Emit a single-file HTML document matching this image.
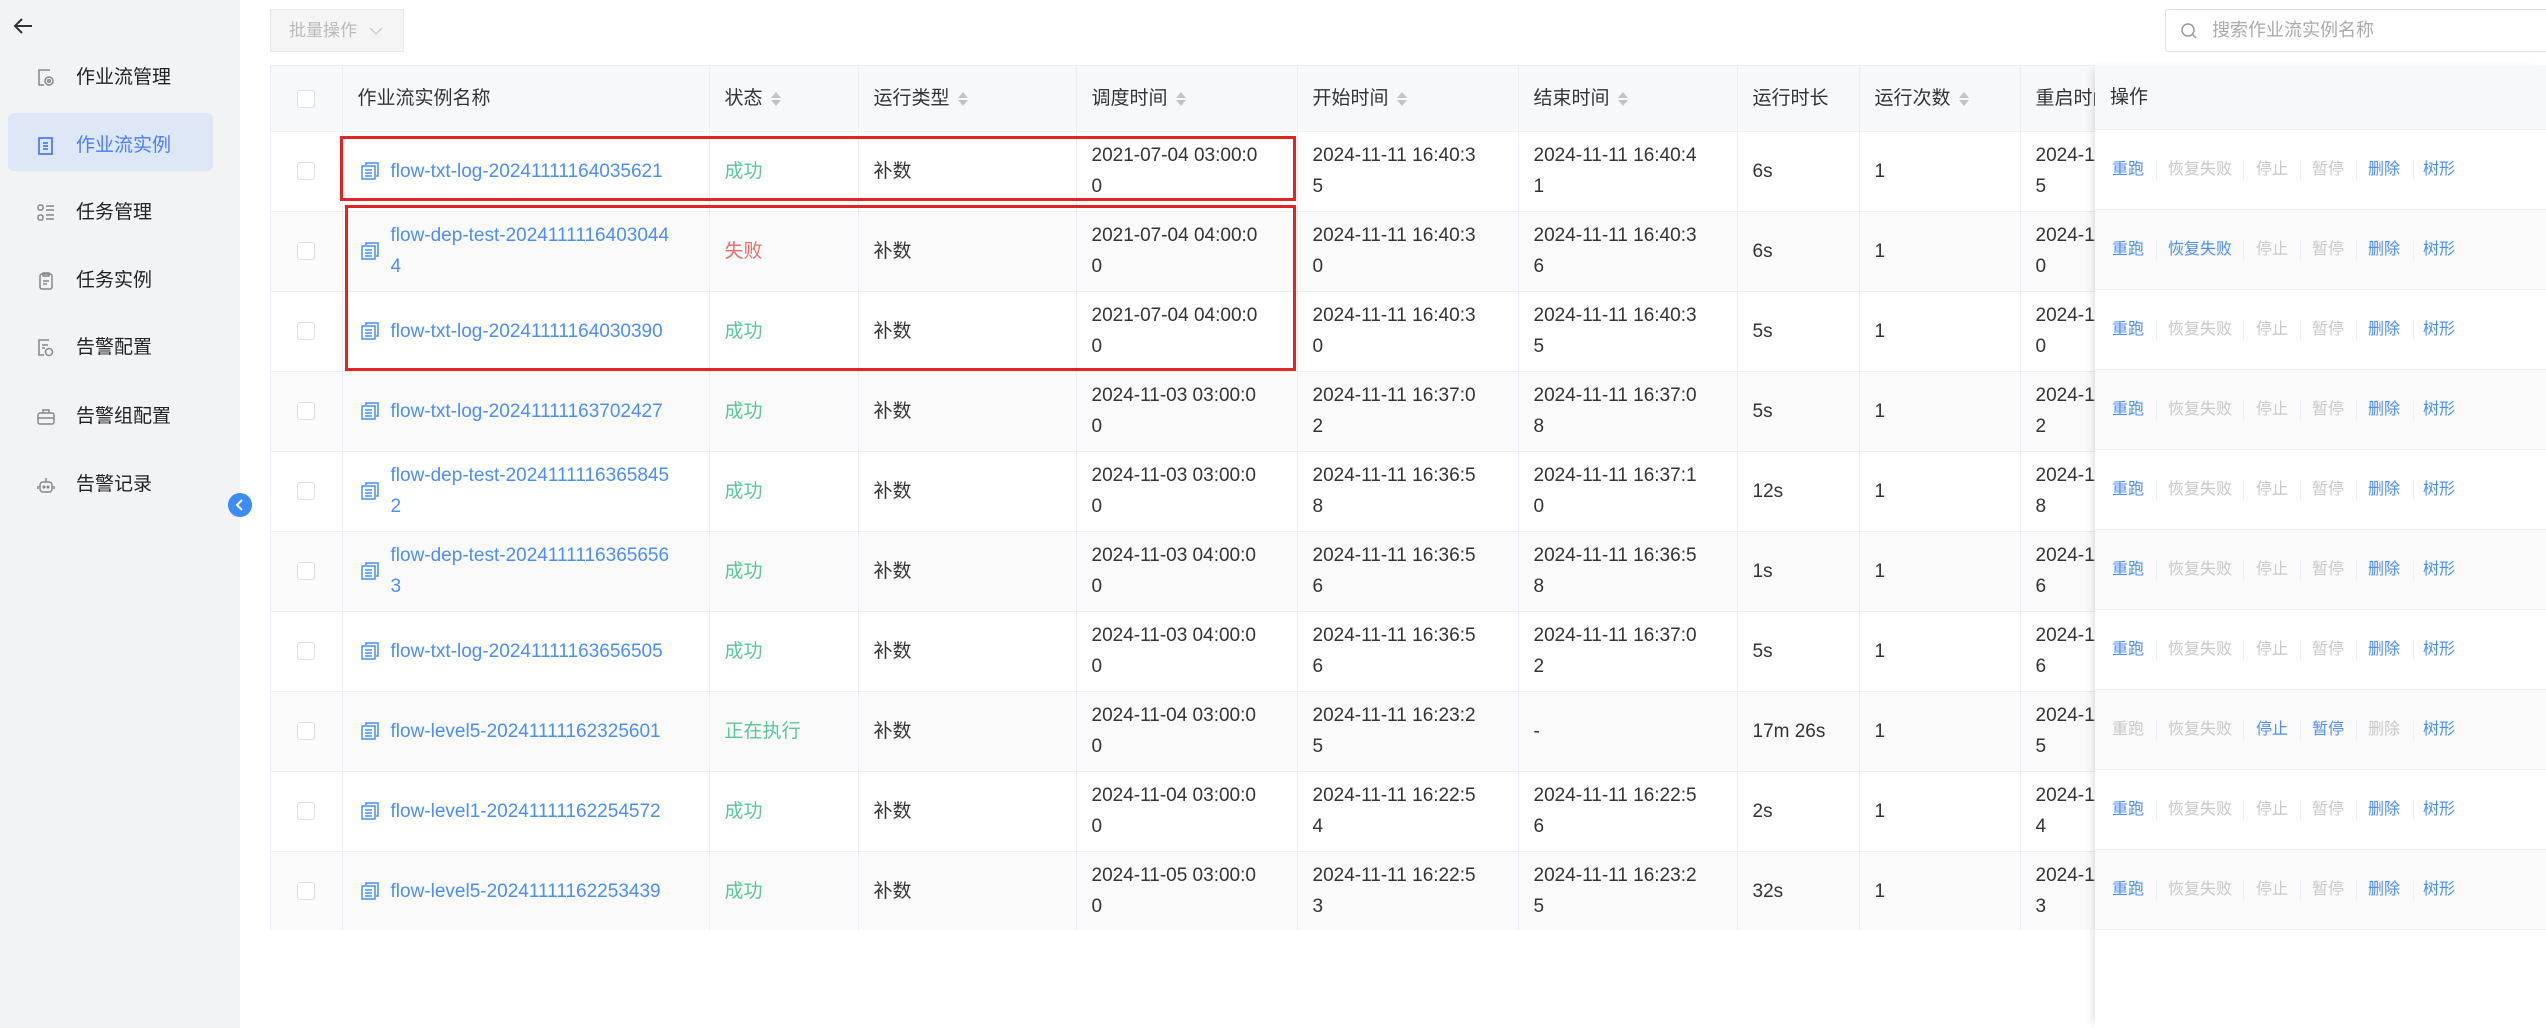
<!DOCTYPE html>
<html><head><meta charset="utf-8">
<style>
*{margin:0;padding:0;box-sizing:border-box}
body{width:2546px;height:1028px;overflow:hidden;background:#fff;font-family:"Liberation Sans","Noto Sans CJK SC",sans-serif;font-size:19px;color:#333;position:relative}
.side{position:absolute;left:0;top:0;width:240px;height:1028px;background:#f2f3f5}
.mi{position:absolute;left:0;width:240px;height:40px;line-height:40px;font-size:19px;color:#222}
.mi .t{position:absolute;left:76px}
.mi svg{position:absolute;left:36px;top:10px}
.act{position:absolute;left:8px;top:113px;width:205px;height:58px;background:#dde7f5;border-radius:6px}
.btn{position:absolute;left:270px;top:9px;width:134px;height:43px;background:#f5f5f5;border:1px solid #e8e8e8;color:#bbb;font-size:17px;line-height:41px;padding-left:18px}
.search{position:absolute;left:2165px;top:9px;width:400px;height:43px;border:1px solid #dcdfe6;border-radius:3px;color:#aaa;font-size:18px;line-height:41px;padding-left:46px}
.wrap{position:absolute;left:270px;top:65px;width:2276px;height:865px;overflow:hidden;border-left:1px solid #ebeef5;border-top:1px solid #ebeef5}
table{border-collapse:collapse;table-layout:fixed;width:2032px}
td,th{border-right:1px solid #ebeef5;border-bottom:1px solid #ebeef5;padding:0 15px;vertical-align:middle;line-height:31px;font-weight:normal;text-align:left;white-space:nowrap;overflow:hidden}
th{height:65px;background:#f7f8fa;color:#333}
td{height:80px}
tr.g td{background:#fafafa}
.cb{display:inline-block;width:18px;height:18px;border:1px solid #dcdfe6;border-radius:3px;background:#fff;vertical-align:middle}
.c0{text-align:center;padding:0}
.lk{color:#4b8ef7}
.nm{position:relative;padding-left:48px}
.nm svg{position:absolute;left:18px;top:50%;margin-top:-9px}
.ok{color:#5ac59a}.bad{color:#ef6b6b}
.s{display:inline-block;vertical-align:middle;margin-left:8px;width:10px;height:16px;position:relative}
.s:before,.s:after{content:"";position:absolute;left:0;border-left:5px solid transparent;border-right:5px solid transparent}
.s:before{top:1px;border-bottom:6px solid #c0c4cc}
.s:after{bottom:1px;border-top:6px solid #c0c4cc}
.ops{position:absolute;left:2095px;top:65px;width:451px;height:963px;background:transparent;box-shadow:-6px 0 8px -4px rgba(0,0,0,.12)}
.or{height:80px;border-bottom:1px solid #ebeef5;position:relative;font-size:16px;background:#fff}
.or.g{background:#fafafa}
.or.h{height:65px;background:#f7f8fa;font-size:19px;line-height:65px;padding-left:15px;color:#333}
.or span{position:absolute;top:29px;line-height:22px}
.or i{position:absolute;top:30px;width:1px;height:20px;background:#ebeef5}
.b{color:#4b8ef7}.d{color:#c8c8c8}
.box{position:absolute;border:3px solid #e02525}
</style></head><body>
<div class="side">
 <svg style="position:absolute;left:12px;top:16px" width="22" height="20" viewBox="0 0 22 20"><path d="M20 10H3M10 3L3 10l7 7" stroke="#333" stroke-width="2" fill="none"/></svg>
 <div class="act"></div>
 <div class="mi" style="top:58px"><svg width="20" height="20" viewBox="0 0 20 20" fill="none" stroke="#888" stroke-width="1.5"><path d="M14 2H3v15h5"/><circle cx="13" cy="13" r="4"/><circle cx="13" cy="13" r="1.3"/></svg><span class="t">作业流管理</span></div>
 <div class="mi" style="top:126px;color:#4b7ef5"><svg width="20" height="20" viewBox="0 0 20 20" fill="none" stroke="#4b7ef5" stroke-width="1.8"><rect x="3" y="2" width="13" height="16"/><path d="M7 7h5M7 10h5M7 13h5"/></svg><span class="t">作业流实例</span></div>
 <div class="mi" style="top:193px"><svg width="20" height="20" viewBox="0 0 20 20" fill="none" stroke="#888" stroke-width="1.5"><rect x="2" y="2" width="5" height="5" rx="2"/><rect x="2" y="12" width="5" height="5" rx="2"/><path d="M10 3h8M10 7h8M10 12h8M10 16h8"/></svg><span class="t">任务管理</span></div>
 <div class="mi" style="top:261px"><svg width="20" height="20" viewBox="0 0 20 20" fill="none" stroke="#888" stroke-width="1.5"><rect x="4" y="3" width="12" height="15" rx="2"/><path d="M7 2h6v3H7zM7 10h6M7 13h4"/></svg><span class="t">任务实例</span></div>
 <div class="mi" style="top:328px"><svg width="20" height="20" viewBox="0 0 20 20" fill="none" stroke="#888" stroke-width="1.5"><path d="M13 2H3v15h5M6 7h6M6 10h3"/><circle cx="13" cy="14" r="3.5"/></svg><span class="t">告警配置</span></div>
 <div class="mi" style="top:397px"><svg width="20" height="20" viewBox="0 0 20 20" fill="none" stroke="#888" stroke-width="1.5"><rect x="2" y="6" width="16" height="11" rx="2"/><path d="M7 6V3h6v3M2 11h16"/></svg><span class="t">告警组配置</span></div>
 <div class="mi" style="top:465px"><svg width="20" height="20" viewBox="0 0 20 20" fill="none" stroke="#888" stroke-width="1.5"><rect x="4" y="7" width="12" height="10" rx="3"/><path d="M10 3v4M2 11v3M18 11v3"/><circle cx="8" cy="12" r=".8"/><circle cx="12" cy="12" r=".8"/></svg><span class="t">告警记录</span></div>
</div>
<svg style="position:absolute;left:228px;top:493px" width="24" height="24" viewBox="0 0 24 24"><circle cx="12" cy="12" r="12" fill="#3d8bf5"/><path d="M14 7l-5 5 5 5" stroke="#fff" stroke-width="2" fill="none"/></svg>
<div class="btn">批量操作<svg style="position:absolute;left:98px;top:16px" width="14" height="10" viewBox="0 0 14 10"><path d="M1 2l6 6 6-6" stroke="#ccc" stroke-width="1.5" fill="none"/></svg></div>
<div class="search"><svg style="position:absolute;left:14px;top:12px" width="18" height="18" viewBox="0 0 18 18" fill="none" stroke="#999" stroke-width="1.5"><circle cx="8" cy="8" r="6"/><path d="M12.5 12.5L16 16"/></svg>搜索作业流实例名称</div>
<div class="wrap"><table>
<colgroup><col style="width:71px"><col style="width:367px"><col style="width:149px"><col style="width:218px"><col style="width:221px"><col style="width:221px"><col style="width:219px"><col style="width:122px"><col style="width:161px"><col style="width:283px"></colgroup>
<tr><th class="c0"><span class="cb"></span></th><th>作业流实例名称</th><th>状态<span class="s"></span></th><th>运行类型<span class="s"></span></th><th>调度时间<span class="s"></span></th><th>开始时间<span class="s"></span></th><th>结束时间<span class="s"></span></th><th>运行时长</th><th>运行次数<span class="s"></span></th><th>重启时间</th></tr>
<tr><td class="c0"><span class="cb"></span></td><td class="nm lk"><svg width="18" height="18" viewBox="0 0 18 18" fill="none" stroke="#4b8ef7" stroke-width="1.5"><path d="M5 3V1h12v13h-2"/><rect x="1" y="4" width="13" height="13"/><path d="M4 8h7M4 11h7M4 14h7"/></svg>flow-txt-log-20241111164035621</td><td class="ok">成功</td><td>补数</td><td>2021-07-04 03:00:0<br>0</td><td>2024-11-11 16:40:3<br>5</td><td>2024-11-11 16:40:4<br>1</td><td>6s</td><td>1</td><td>2024-11-11 16:40:4<br>5</td></tr>
<tr class="g"><td class="c0"><span class="cb"></span></td><td class="nm lk"><svg width="18" height="18" viewBox="0 0 18 18" fill="none" stroke="#4b8ef7" stroke-width="1.5"><path d="M5 3V1h12v13h-2"/><rect x="1" y="4" width="13" height="13"/><path d="M4 8h7M4 11h7M4 14h7"/></svg>flow-dep-test-2024111116403044<br>4</td><td class="bad">失败</td><td>补数</td><td>2021-07-04 04:00:0<br>0</td><td>2024-11-11 16:40:3<br>0</td><td>2024-11-11 16:40:3<br>6</td><td>6s</td><td>1</td><td>2024-11-11 16:40:4<br>0</td></tr>
<tr><td class="c0"><span class="cb"></span></td><td class="nm lk"><svg width="18" height="18" viewBox="0 0 18 18" fill="none" stroke="#4b8ef7" stroke-width="1.5"><path d="M5 3V1h12v13h-2"/><rect x="1" y="4" width="13" height="13"/><path d="M4 8h7M4 11h7M4 14h7"/></svg>flow-txt-log-20241111164030390</td><td class="ok">成功</td><td>补数</td><td>2021-07-04 04:00:0<br>0</td><td>2024-11-11 16:40:3<br>0</td><td>2024-11-11 16:40:3<br>5</td><td>5s</td><td>1</td><td>2024-11-11 16:40:4<br>0</td></tr>
<tr class="g"><td class="c0"><span class="cb"></span></td><td class="nm lk"><svg width="18" height="18" viewBox="0 0 18 18" fill="none" stroke="#4b8ef7" stroke-width="1.5"><path d="M5 3V1h12v13h-2"/><rect x="1" y="4" width="13" height="13"/><path d="M4 8h7M4 11h7M4 14h7"/></svg>flow-txt-log-20241111163702427</td><td class="ok">成功</td><td>补数</td><td>2024-11-03 03:00:0<br>0</td><td>2024-11-11 16:37:0<br>2</td><td>2024-11-11 16:37:0<br>8</td><td>5s</td><td>1</td><td>2024-11-11 16:40:4<br>2</td></tr>
<tr><td class="c0"><span class="cb"></span></td><td class="nm lk"><svg width="18" height="18" viewBox="0 0 18 18" fill="none" stroke="#4b8ef7" stroke-width="1.5"><path d="M5 3V1h12v13h-2"/><rect x="1" y="4" width="13" height="13"/><path d="M4 8h7M4 11h7M4 14h7"/></svg>flow-dep-test-2024111116365845<br>2</td><td class="ok">成功</td><td>补数</td><td>2024-11-03 03:00:0<br>0</td><td>2024-11-11 16:36:5<br>8</td><td>2024-11-11 16:37:1<br>0</td><td>12s</td><td>1</td><td>2024-11-11 16:40:4<br>8</td></tr>
<tr class="g"><td class="c0"><span class="cb"></span></td><td class="nm lk"><svg width="18" height="18" viewBox="0 0 18 18" fill="none" stroke="#4b8ef7" stroke-width="1.5"><path d="M5 3V1h12v13h-2"/><rect x="1" y="4" width="13" height="13"/><path d="M4 8h7M4 11h7M4 14h7"/></svg>flow-dep-test-2024111116365656<br>3</td><td class="ok">成功</td><td>补数</td><td>2024-11-03 04:00:0<br>0</td><td>2024-11-11 16:36:5<br>6</td><td>2024-11-11 16:36:5<br>8</td><td>1s</td><td>1</td><td>2024-11-11 16:40:4<br>6</td></tr>
<tr><td class="c0"><span class="cb"></span></td><td class="nm lk"><svg width="18" height="18" viewBox="0 0 18 18" fill="none" stroke="#4b8ef7" stroke-width="1.5"><path d="M5 3V1h12v13h-2"/><rect x="1" y="4" width="13" height="13"/><path d="M4 8h7M4 11h7M4 14h7"/></svg>flow-txt-log-20241111163656505</td><td class="ok">成功</td><td>补数</td><td>2024-11-03 04:00:0<br>0</td><td>2024-11-11 16:36:5<br>6</td><td>2024-11-11 16:37:0<br>2</td><td>5s</td><td>1</td><td>2024-11-11 16:40:4<br>6</td></tr>
<tr class="g"><td class="c0"><span class="cb"></span></td><td class="nm lk"><svg width="18" height="18" viewBox="0 0 18 18" fill="none" stroke="#4b8ef7" stroke-width="1.5"><path d="M5 3V1h12v13h-2"/><rect x="1" y="4" width="13" height="13"/><path d="M4 8h7M4 11h7M4 14h7"/></svg>flow-level5-20241111162325601</td><td class="ok">正在执行</td><td>补数</td><td>2024-11-04 03:00:0<br>0</td><td>2024-11-11 16:23:2<br>5</td><td>-</td><td>17m 26s</td><td>1</td><td>2024-11-11 16:40:4<br>5</td></tr>
<tr><td class="c0"><span class="cb"></span></td><td class="nm lk"><svg width="18" height="18" viewBox="0 0 18 18" fill="none" stroke="#4b8ef7" stroke-width="1.5"><path d="M5 3V1h12v13h-2"/><rect x="1" y="4" width="13" height="13"/><path d="M4 8h7M4 11h7M4 14h7"/></svg>flow-level1-20241111162254572</td><td class="ok">成功</td><td>补数</td><td>2024-11-04 03:00:0<br>0</td><td>2024-11-11 16:22:5<br>4</td><td>2024-11-11 16:22:5<br>6</td><td>2s</td><td>1</td><td>2024-11-11 16:40:4<br>4</td></tr>
<tr class="g"><td class="c0"><span class="cb"></span></td><td class="nm lk"><svg width="18" height="18" viewBox="0 0 18 18" fill="none" stroke="#4b8ef7" stroke-width="1.5"><path d="M5 3V1h12v13h-2"/><rect x="1" y="4" width="13" height="13"/><path d="M4 8h7M4 11h7M4 14h7"/></svg>flow-level5-20241111162253439</td><td class="ok">成功</td><td>补数</td><td>2024-11-05 03:00:0<br>0</td><td>2024-11-11 16:22:5<br>3</td><td>2024-11-11 16:23:2<br>5</td><td>32s</td><td>1</td><td>2024-11-11 16:40:4<br>3</td></tr>
</table></div>
<div class="ops">
<div class="or h">操作</div>
<div class="or"><span class="b" style="left:17px">重跑</span><i style="left:61px"></i><span class="d" style="left:73px">恢复失败</span><i style="left:148px"></i><span class="d" style="left:161px">停止</span><i style="left:205px"></i><span class="d" style="left:217px">暂停</span><i style="left:261px"></i><span class="b" style="left:273px">删除</span><i style="left:318px"></i><span class="b" style="left:328px">树形</span></div>
<div class="or g"><span class="b" style="left:17px">重跑</span><i style="left:61px"></i><span class="b" style="left:73px">恢复失败</span><i style="left:148px"></i><span class="d" style="left:161px">停止</span><i style="left:205px"></i><span class="d" style="left:217px">暂停</span><i style="left:261px"></i><span class="b" style="left:273px">删除</span><i style="left:318px"></i><span class="b" style="left:328px">树形</span></div>
<div class="or"><span class="b" style="left:17px">重跑</span><i style="left:61px"></i><span class="d" style="left:73px">恢复失败</span><i style="left:148px"></i><span class="d" style="left:161px">停止</span><i style="left:205px"></i><span class="d" style="left:217px">暂停</span><i style="left:261px"></i><span class="b" style="left:273px">删除</span><i style="left:318px"></i><span class="b" style="left:328px">树形</span></div>
<div class="or g"><span class="b" style="left:17px">重跑</span><i style="left:61px"></i><span class="d" style="left:73px">恢复失败</span><i style="left:148px"></i><span class="d" style="left:161px">停止</span><i style="left:205px"></i><span class="d" style="left:217px">暂停</span><i style="left:261px"></i><span class="b" style="left:273px">删除</span><i style="left:318px"></i><span class="b" style="left:328px">树形</span></div>
<div class="or"><span class="b" style="left:17px">重跑</span><i style="left:61px"></i><span class="d" style="left:73px">恢复失败</span><i style="left:148px"></i><span class="d" style="left:161px">停止</span><i style="left:205px"></i><span class="d" style="left:217px">暂停</span><i style="left:261px"></i><span class="b" style="left:273px">删除</span><i style="left:318px"></i><span class="b" style="left:328px">树形</span></div>
<div class="or g"><span class="b" style="left:17px">重跑</span><i style="left:61px"></i><span class="d" style="left:73px">恢复失败</span><i style="left:148px"></i><span class="d" style="left:161px">停止</span><i style="left:205px"></i><span class="d" style="left:217px">暂停</span><i style="left:261px"></i><span class="b" style="left:273px">删除</span><i style="left:318px"></i><span class="b" style="left:328px">树形</span></div>
<div class="or"><span class="b" style="left:17px">重跑</span><i style="left:61px"></i><span class="d" style="left:73px">恢复失败</span><i style="left:148px"></i><span class="d" style="left:161px">停止</span><i style="left:205px"></i><span class="d" style="left:217px">暂停</span><i style="left:261px"></i><span class="b" style="left:273px">删除</span><i style="left:318px"></i><span class="b" style="left:328px">树形</span></div>
<div class="or g"><span class="d" style="left:17px">重跑</span><i style="left:61px"></i><span class="d" style="left:73px">恢复失败</span><i style="left:148px"></i><span class="b" style="left:161px">停止</span><i style="left:205px"></i><span class="b" style="left:217px">暂停</span><i style="left:261px"></i><span class="d" style="left:273px">删除</span><i style="left:318px"></i><span class="b" style="left:328px">树形</span></div>
<div class="or"><span class="b" style="left:17px">重跑</span><i style="left:61px"></i><span class="d" style="left:73px">恢复失败</span><i style="left:148px"></i><span class="d" style="left:161px">停止</span><i style="left:205px"></i><span class="d" style="left:217px">暂停</span><i style="left:261px"></i><span class="b" style="left:273px">删除</span><i style="left:318px"></i><span class="b" style="left:328px">树形</span></div>
<div class="or g"><span class="b" style="left:17px">重跑</span><i style="left:61px"></i><span class="d" style="left:73px">恢复失败</span><i style="left:148px"></i><span class="d" style="left:161px">停止</span><i style="left:205px"></i><span class="d" style="left:217px">暂停</span><i style="left:261px"></i><span class="b" style="left:273px">删除</span><i style="left:318px"></i><span class="b" style="left:328px">树形</span></div>
</div>
<div class="box" style="left:340px;top:136px;width:956px;height:65px"></div>
<div class="box" style="left:345px;top:205px;width:951px;height:166px"></div>
</body></html>
